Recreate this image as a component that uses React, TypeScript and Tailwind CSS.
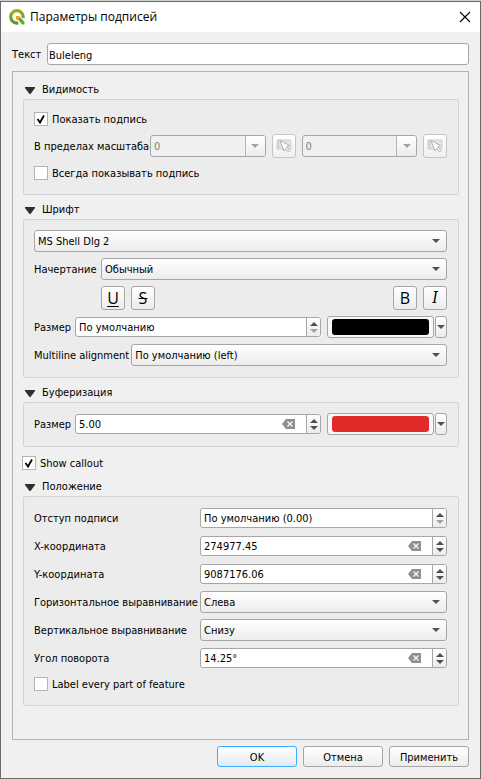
import { useId, useState } from "react";
import type { ReactNode } from "react";

const edge = "rounded-[3px] border border-[#a6a6a6]";
const face = "bg-linear-to-b from-white to-[#ececec]";

function Arrow({ up = false, dim = false, disabled = false }: { up?: boolean; dim?: boolean; disabled?: boolean }) {
  return (
    <svg
      aria-hidden="true"
      width="8"
      height="4"
      viewBox="0 0 8 4"
      className={`block shrink-0 ${dim || disabled ? "text-[#a3a3a3]" : "text-[#505050]"}`}
    >
      <path d={up ? "M0 4L4 0L8 4Z" : "M0 0H8L4 4Z"} fill="currentColor" />
    </svg>
  );
}

function Logo() {
  return (
    <svg aria-hidden="true" width="16" height="16" viewBox="0 0 16 16" className="block shrink-0">
      <defs>
        <linearGradient id="ring" x1="0" y1="0" x2="0" y2="1">
          <stop offset="0" stopColor="#93b023" />
          <stop offset="1" stopColor="#589632" />
        </linearGradient>
      </defs>
      <path
        d="M9.2 13.9A6.2 6.2 0 1 1 14 9"
        fill="none"
        stroke="url(#ring)"
        strokeWidth="3.2"
      />
      <path d="M7 7H10.5L11.5 8.5L9 11L7 10.5Z" fill="#f0a030" />
      <path d="M9 10.5L11.5 8.5L15.5 13V15.5H13Z" fill="#6fa52c" />
    </svg>
  );
}

function CheckRow({ label, initial = false }: { label: string; initial?: boolean }) {
  return (
    <label className="flex h-[18px] items-center gap-1">
      <span className="grid">
        <input
          type="checkbox"
          defaultChecked={initial}
          className="peer col-start-1 row-start-1 size-3.5 appearance-none border border-[#b4b4b4] bg-white"
        />
        <svg
          aria-hidden="true"
          viewBox="0 0 14 14"
          className="pointer-events-none invisible col-start-1 row-start-1 size-3.5 peer-checked:visible"
        >
          <path d="M3.5 7L6 10.5L10 3.5" fill="none" stroke="#000" strokeWidth="1.8" />
        </svg>
      </span>
      <span className="pt-0.5">{label}</span>
    </label>
  );
}

function Combo({ id, label, value }: { id: string; label?: string; value: string }) {
  return (
    <span className="grid min-w-0 flex-1 items-center">
      <select
        id={id}
        aria-label={label}
        className={`col-start-1 row-start-1 h-[22px] w-full appearance-none pt-0.5 pr-5 pl-[3px] ${edge} ${face}`}
      >
        <option>{value}</option>
      </select>
      <span className="pointer-events-none col-start-1 row-start-1 mr-[7px] justify-self-end">
        <Arrow />
      </span>
    </span>
  );
}

function Spin({ id, value, clear = false }: { id: string; value: string; clear?: boolean }) {
  const [text, setText] = useState(value);
  return (
    <span className={`flex h-5 min-w-0 flex-1 overflow-hidden bg-white ${edge}`}>
      <input
        id={id}
        type="text"
        value={text}
        onChange={(e) => setText(e.target.value)}
        className="min-w-0 flex-1 pt-0.5 pl-[3px] outline-none"
      />
      {clear && (
        <button type="button" aria-label="Очистить" className="mr-[11px]" onClick={() => setText("")}>
          <svg aria-hidden="true" width="13" height="10" viewBox="0 0 13 10" className="block">
            <path d="M4 0H13V10H4L0 5Z" fill="#8f8f8f" />
            <path d="M5.5 2.5L10.5 7.5M10.5 2.5L5.5 7.5" stroke="#fff" strokeWidth="1.1" />
          </svg>
        </button>
      )}
      <span className={`flex w-3.5 flex-col border-l border-[#a6a6a6] ${face}`}>
        <button type="button" aria-label="Больше" className="flex flex-1 items-end justify-center pb-px">
          <Arrow up />
        </button>
        <button type="button" aria-label="Меньше" className="flex flex-1 items-start justify-center pt-0.5">
          <Arrow dim={!clear} />
        </button>
      </span>
    </span>
  );
}

function ScaleInput({ label }: { label: string }) {
  return (
    <>
      <span className={`flex h-[22px] min-w-0 flex-1 overflow-hidden bg-[#f0f0f0] ${edge}`}>
        <input
          type="text"
          aria-label={label}
          defaultValue="0"
          disabled
          className="min-w-0 flex-1 pt-0.5 pl-[3px] text-[#7d7d7d]"
        />
        <button
          type="button"
          aria-label="Список масштабов"
          disabled
          className={`flex w-5 items-center justify-center border-l border-[#b4b4b4] ${face}`}
        >
          <Arrow disabled />
        </button>
      </span>
      <button
        type="button"
        aria-label="Взять масштаб карты"
        disabled
        className="flex size-6 shrink-0 items-center justify-center rounded-[3px] border border-[#c4c4c4] bg-linear-to-b from-white to-[#f0f0f0]"
      >
        <svg aria-hidden="true" width="16" height="16" viewBox="0 0 16 16" className="block">
          <path d="M1 2H15V11H1Z" fill="#e4e4e4" stroke="#d0d0d0" />
          <path d="M2.5 2V11" stroke="#c8c8c8" />
          <path
            d="M4 2.5L13.5 7.5L10.5 9L14 12.5L12.5 14L9.5 10.5L8 13Z"
            fill="#fff"
            stroke="#b0b0b0"
          />
        </svg>
      </button>
    </>
  );
}

function ColorPicker({ label, color }: { label: string; color: string }) {
  return (
    <span className="ml-1 flex w-[120px] shrink-0 gap-px">
      <button type="button" aria-label={label} className={`h-[22px] flex-1 px-1 ${edge} bg-[#f8f8f8]`}>
        <span className={`block h-4 rounded-[3px] ${color}`} />
      </button>
      <button
        type="button"
        aria-label="Меню цвета"
        className={`flex h-[22px] w-3 items-center justify-center ${edge} ${face}`}
      >
        <Arrow />
      </button>
    </span>
  );
}

function StyleButton({ label, children }: { label: string; children: ReactNode }) {
  return (
    <button
      type="button"
      aria-label={label}
      className={`flex size-6 items-center justify-center font-['Open_Sans',sans-serif] text-[16px] leading-none ${edge} ${face}`}
    >
      {children}
    </button>
  );
}

function Group({ title, className, children }: { title: string; className: string; children: ReactNode }) {
  return (
    <section>
      <h2 className="mt-1 h-5">
        <button type="button" className="flex h-5 items-center gap-[7px] pl-0.5">
          <svg aria-hidden="true" width="10" height="7" viewBox="0 0 10 7" className="mt-0.5 block">
            <path d="M0 0H10V1L5.5 7H4.5L0 1Z" fill="#2f2f2f" />
          </svg>
          <span className="pt-0.5">{title}</span>
        </button>
      </h2>
      <div
        className={`flex flex-col gap-1.5 rounded-[2px] border border-[#d4d4d4] bg-[#ececec] pt-2.5 pr-[11px] pl-2.5 ${className}`}
      >
        {children}
      </div>
    </section>
  );
}

function Row({ label, children, width = "" }: { label: string; width?: string; children: (id: string) => ReactNode }) {
  const id = useId();
  return (
    <div className="flex h-[22px] items-center gap-0.5">
      <label htmlFor={id} className={`shrink-0 pt-0.5 whitespace-nowrap ${width}`}>
        {label}
      </label>
      {children(id)}
    </div>
  );
}

export default function App() {
  return (
    <div className="flex min-h-screen flex-col bg-[#cdd0ce] pt-px pr-px pb-px font-['DejaVu_Sans_Condensed','DejaVu_Sans',sans-serif] text-[11px] leading-4 text-black">
      <main className="flex flex-1 flex-col border border-[#6c6c6c] bg-[#f0f0f0]">
        <header className="flex h-[30px] items-center gap-[5px] bg-white pr-[9px] pl-2">
          <Logo />
          <h1 className="flex-1 font-['Open_Sans','Noto_Sans',sans-serif] text-[12px]">Параметры подписей</h1>
          <button type="button" aria-label="Закрыть">
            <svg aria-hidden="true" width="12" height="12" viewBox="0 0 12 12" className="block">
              <path d="M1 1L11 11M11 1L1 11" stroke="#000" strokeWidth="1.1" />
            </svg>
          </button>
        </header>

        <div className="flex flex-1 flex-col gap-1.5 px-[11px] pt-[11px] pb-[11px]">
          <div className="flex items-center gap-1.5">
            <label htmlFor="label-text" className="w-[29px] pt-0.5">Текст</label>
            <input
              id="label-text"
              type="text"
              defaultValue="Buleleng"
              className={`h-[22px] min-w-0 flex-1 bg-white px-px pt-0.5 ${edge}`}
            />
          </div>

          <div className="flex-1 border border-[#b4b4b4] pt-[3px] pr-[9px] pl-2.5">
            <Group title="Видимость" className="pb-3">
              <CheckRow label="Показать подпись" initial />
              <div className="flex h-6 items-center gap-1.5">
                <span className="w-[110px] shrink-0 pt-0.5 whitespace-nowrap">В пределах масштаба</span>
                <ScaleInput label="Минимальный масштаб" />
                <ScaleInput label="Максимальный масштаб" />
              </div>
              <CheckRow label="Всегда показывать подпись" />
            </Group>

            <Group title="Шрифт" className="pb-[11px]">
              <div className="flex">
                <Combo id="font-family" label="Шрифт" value="MS Shell Dlg 2" />
              </div>
              <Row label="Начертание" width="w-[65px]">{(id) => <Combo id={id} value="Обычный" />}</Row>
              <div className="flex gap-1.5 pl-[67px]">
                <StyleButton label="Подчёркнутый">
                  <span className="underline underline-offset-2">U</span>
                </StyleButton>
                <StyleButton label="Зачёркнутый">
                  <span className="line-through">S</span>
                </StyleButton>
                <span className="flex-1" />
                <StyleButton label="Полужирный">B</StyleButton>
                <StyleButton label="Курсив">
                  <span className="font-['DejaVu_Serif_Condensed','DejaVu_Serif',serif] italic">I</span>
                </StyleButton>
              </div>
              <Row label="Размер" width="w-[39px]">
                {(id) => (
                  <>
                    <Spin id={id} value="По умолчанию" />
                    <ColorPicker label="Цвет шрифта" color="bg-black" />
                  </>
                )}
              </Row>
              <Row label="Multiline alignment">{(id) => <Combo id={id} value="По умолчанию (left)" />}</Row>
            </Group>

            <Group title="Буферизация" className="pb-[11px]">
              <Row label="Размер" width="w-[39px]">
                {(id) => (
                  <>
                    <Spin id={id} value="5.00" clear />
                    <ColorPicker label="Цвет буфера" color="bg-[#e32a2a]" />
                  </>
                )}
              </Row>
            </Group>

            <div className="-ml-px pt-[7px]">
              <CheckRow label="Show callout" initial />
            </div>

            <Group title="Положение" className="pb-3">
              <Row width="w-[164px]" label="Отступ подписи">
                {(id) => <Spin id={id} value="По умолчанию (0.00)" />}
              </Row>
              <Row width="w-[164px]" label="X-координата">{(id) => <Spin id={id} value="274977.45" clear />}</Row>
              <Row width="w-[164px]" label="Y-координата">{(id) => <Spin id={id} value="9087176.06" clear />}</Row>
              <Row width="w-[164px]" label="Горизонтальное выравнивание">
                {(id) => <Combo id={id} value="Слева" />}
              </Row>
              <Row width="w-[164px]" label="Вертикальное выравнивание">{(id) => <Combo id={id} value="Снизу" />}</Row>
              <Row width="w-[164px]" label="Угол поворота">{(id) => <Spin id={id} value="14.25°" clear />}</Row>
              <CheckRow label="Label every part of feature" />
            </Group>
          </div>

          <footer className="flex justify-end gap-1.5">
            <button
              type="button"
              className="h-[21px] w-20 rounded-[3px] border border-[#3daeff] bg-linear-to-b from-white to-[#e2eaf0] pt-0.5"
            >
              OK
            </button>
            <button type="button" className={`h-[21px] w-20 pt-0.5 ${edge} ${face}`}>
              Отмена
            </button>
            <button type="button" className={`h-[21px] w-20 pt-0.5 ${edge} ${face}`}>
              Применить
            </button>
          </footer>
        </div>
      </main>
    </div>
  );
}
